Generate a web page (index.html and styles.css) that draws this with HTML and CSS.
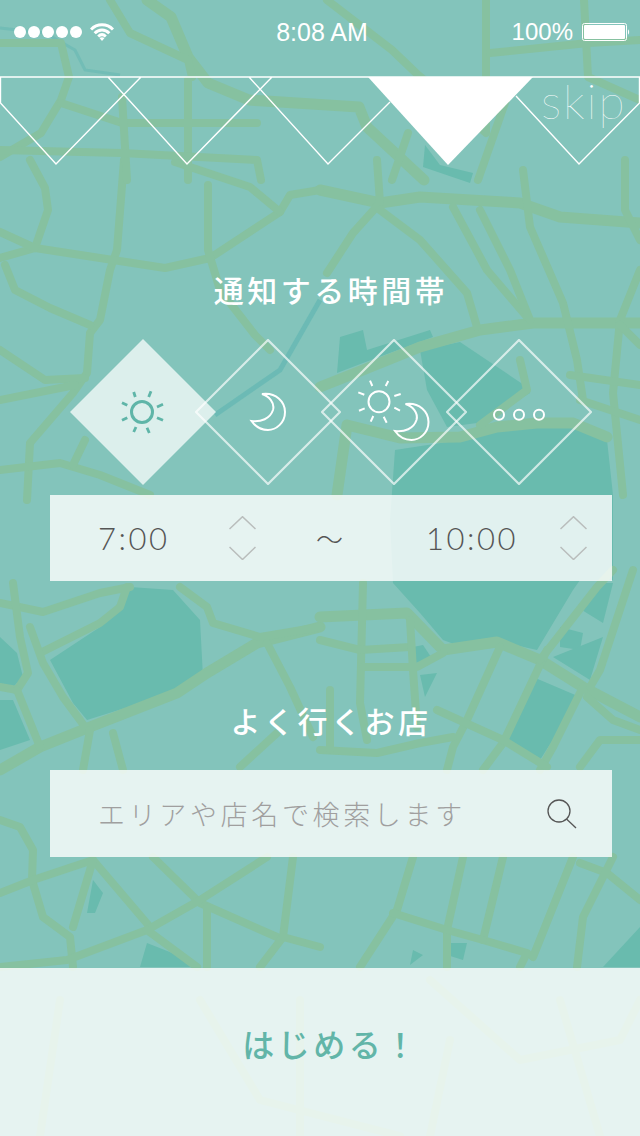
FILE: index.html
```html
<!DOCTYPE html>
<html lang="ja">
<head>
<meta charset="utf-8">
<title>通知する時間帯</title>
<link rel="stylesheet" href="styles.css">
</head>
<body>
<div class="page">
  <svg class="map" viewBox="0 0 640 1136" aria-hidden="true">
    <g class="water">
      <path d="M130 587L173 590 200 620 203 677 173 693 87 720 73 703 50 660 100 627Z"/>
      <path d="M0 637L17 653 23 677 13 687 0 685Z"/>
      <path d="M0 700L13 700 30 740 0 750Z"/>
      <path d="M395 450L460 440 500 430 570 425 607 440 613 495 613 580 580 580 573 590 537 650 493 640 470 650 443 640 420 613 393 583 390 520Z"/>
      <path d="M420 350L460 342 527 387 530 393 477 423 447 427 427 390Z"/>
      <path d="M340 337L363 330 367 350 430 330 433 337 363 363 337 373Z"/>
      <path d="M425 145L440 165 473 173 470 183 423 167Z"/>
      <path d="M533 677L580 697 540 760 507 740Z"/>
      <path d="M560 627L583 633 580 650 560 647Z"/>
      <path d="M553 657L603 637 590 680Z"/>
      <path d="M577 607L597 583 613 583 603 623Z"/>
      <path d="M413 647L423 645 433 660 415 663Z"/>
      <path d="M420 675L437 673 425 697Z"/>
      <path d="M87 913L93 880 103 893 95 913Z"/>
      <path d="M140 967L147 943 190 960 193 967Z"/>
      <path d="M640 927L603 967 640 967Z"/>
      <path d="M447 955L447 943 467 943 463 960Z"/>
      <path d="M410 965L413 950 423 955Z"/>
    </g>
    <path class="river" d="M320 300L300 335 280 370 215 415"/>
    <path class="river river-thin" d="M0 28L45 33 75 50 85 70 120 75"/>
    <g class="roads roads-main">
      <path d="M320 190L380 203 420 197 520 203 560 217 640 223"/>
      <path d="M320 387L363 370 420 347 480 330 533 323 640 323"/>
      <path d="M0 770L40 747 90 727 177 693 207 673 257 643 320 627"/>
      <path d="M320 617L407 613 443 650 497 642 540 660 583 687 640 717"/>
      <path d="M337 495L347 425 400 438 460 437 497 427 537 423 573 423 607 437"/>
      <path d="M147 0L171 17 188 57 208 83 249 100 359 107 367 127 424 180"/>
    </g>
    <g class="roads">
      <path d="M30 160L45 188 48 210 36 245"/>
      <path d="M124 160L117 250 110 270 100 320 90 333 87 373 73 393 30 443 27 500"/>
      <path d="M0 258L35 248 100 258 165 268 210 258 280 212 290 195 320 190"/>
      <path d="M175 162L250 187 280 212"/>
      <path d="M208 185L208 250 220 290 255 335 270 350"/>
      <path d="M0 232L35 248"/>
      <path d="M5 265L15 290 50 308 90 325"/>
      <path d="M0 350L45 380 85 378"/>
      <path d="M0 400L75 385"/>
      <path d="M0 470L60 463 100 475 150 495"/>
      <path d="M85 440L73 465"/>
      <path d="M377 160L380 203 353 233 327 273"/>
      <path d="M380 210L420 240 467 293 477 327"/>
      <path d="M453 207L487 270 527 317"/>
      <path d="M480 210L510 270 530 320"/>
      <path d="M523 170L530 227 563 303 577 360 583 400"/>
      <path d="M625 160L625 210 640 240"/>
      <path d="M640 270L620 320 613 393 623 495"/>
      <path d="M620 325L640 345"/>
      <path d="M570 375L640 385"/>
      <path d="M580 400L640 420"/>
      <path d="M520 360L527 390 480 425"/>
      <path d="M0 603L43 612 100 593 130 587"/>
      <path d="M40 653L100 623 120 607 127 587"/>
      <path d="M13 583L20 637 28 673 17 690 0 687"/>
      <path d="M30 627L43 663 63 697 80 720 87 730"/>
      <path d="M17 690L40 747"/>
      <path d="M180 587L207 607 213 623 260 637 320 627"/>
      <path d="M267 643L290 687 313 737"/>
      <path d="M240 767L277 733"/>
      <path d="M90 730L83 770"/>
      <path d="M113 733L123 770"/>
      <path d="M0 820L20 827 33 850 32 880 43 917 70 937 73 967"/>
      <path d="M0 893L33 880 93 860 150 927"/>
      <path d="M93 860L73 927"/>
      <path d="M153 857L200 903 277 937"/>
      <path d="M267 857L200 900 147 930 67 960 0 967"/>
      <path d="M147 930L197 967"/>
      <path d="M207 907L207 967"/>
      <path d="M293 857L283 937 260 967"/>
      <path d="M283 937L320 947"/>
      <path d="M363 583L360 703 367 740"/>
      <path d="M320 640L360 650 410 647"/>
      <path d="M410 620L413 670 417 727"/>
      <path d="M443 653L417 667 363 667"/>
      <path d="M500 647L467 720 453 747 447 770"/>
      <path d="M547 650L503 743 483 770"/>
      <path d="M540 660L597 587 613 570"/>
      <path d="M583 687L553 747 540 770"/>
      <path d="M633 570L600 670 590 687"/>
      <path d="M437 710L503 740 547 767"/>
      <path d="M320 750L377 753 420 743 453 737"/>
      <path d="M587 697L613 720 640 730"/>
      <path d="M640 740L600 740 580 767"/>
      <path d="M330 690L330 750"/>
      <path d="M413 857L397 910 360 967"/>
      <path d="M463 857L447 930 447 967"/>
      <path d="M503 857L483 940 527 953 520 967"/>
      <path d="M573 857L533 957"/>
      <path d="M393 913L447 930 483 940"/>
      <path d="M580 863L607 873 640 900"/>
      <path d="M613 857L583 917 577 967"/>
      <path d="M110 0L130 33 188 60 192 77"/>
      <path d="M0 43L61 43 69 77 61 100 41 133 0 157"/>
      <path d="M61 103L122 123 257 123"/>
      <path d="M122 97L127 180"/>
      <path d="M188 80L188 180"/>
      <path d="M0 150L122 153 257 160 261 180"/>
      <path d="M327 0L392 50 416 73 486 133 486 0"/>
      <path d="M584 0L588 77 640 100"/>
      <path d="M490 53L588 43 640 40"/>
      <path d="M408 133L392 180"/>
      <path d="M506 100L478 180"/>
      <path d="M60 1000L40 1136"/>
      <path d="M200 1000L260 1100 400 1136"/>
      <path d="M430 980L520 1060 620 1040 640 1000"/>
      <path d="M300 1000L300 1136"/>
      <path d="M450 1040L430 1136"/>
      <path d="M560 1000L600 1136"/>
    </g>
  </svg>

  <header class="status">
    <div class="status-left">
      <span class="signal"><i></i><i></i><i></i><i></i><i></i></span>
      <svg class="wifi" viewBox="0 0 24 18" aria-hidden="true">
        <path d="M1 6.500C7 .2 17 .2 23 6.500"/>
        <path d="M4.700 10.200C9 5.800 15 5.800 19.300 10.200"/>
        <path d="M8.200 13.500C10.500 11.300 13.500 11.300 15.800 13.500"/>
        <path class="wifi-tip" d="M12 18L9.500 15C11 14 13 14 14.500 15Z"/>
      </svg>
    </div>
    <span class="clock">8:08 AM</span>
    <div class="status-right">
      <span class="percent">100%</span>
      <svg class="battery" viewBox="0 0 48 18" aria-hidden="true">
        <rect class="battery-shell" x=".5" y=".5" width="44" height="17" rx="2"/>
        <rect class="battery-fill" x="2" y="2" width="41" height="14" rx="1"/>
        <path class="battery-fill" d="M46 6.500C47.500 7 47.500 11 46 11.500Z"/>
      </svg>
    </div>
  </header>

  <nav class="steps">
    <svg class="bunting" viewBox="0 0 640 90" aria-hidden="true">
      <path class="bunting-line" d="M0 1H640M.5 1V27L56 88 141 1M108 1L187 88 272 1M249 1L328 88 390 26M516 20L579 88 639.500 27V1"/>
      <path class="bunting-on" d="M368 1H533L448 89Z"/>
    </svg>
    <span class="skip">skip</span>
  </nav>

  <h2 class="heading heading-first">通知する時間帯</h2>

  <div class="slots">
    <svg class="slot" viewBox="-73 -73 146 146" aria-hidden="true">
      <path class="slot-on" d="M0 -73L73 0 0 73 -73 0Z"/>
      <g transform="translate(-1 0)">
        <circle class="sun-dark" r="10.500"/>
        <path class="sun-dark sun-rays" d="M-8.300 -20L-6.700 -15M9 -20.700L6.700 -15M-20 -9.300L-14.700 -6.700M21 -7.700L15 -5M-20 8.300L-14.700 5.700M15 5.700L21 8.300M-8.300 20L-6 15M7.300 21L5 15.700"/>
      </g>
    </svg>
    <svg class="slot" viewBox="-73 -73 146 146" aria-hidden="true">
      <path class="slot-line" d="M0 -72L72 0 0 72 -72 0Z"/>
      <path class="glyph" d="M-6 -18C8 -20 17 -10 17 0C17 11 8 18 0 18C-7 18 -13 14 -16.500 9C-7 10 2 7 5 -2C7 -9 1 -16 -6 -18Z"/>
    </svg>
    <svg class="slot" viewBox="-73 -73 146 146" aria-hidden="true">
      <path class="slot-line" d="M0 -72L72 0 0 72 -72 0Z"/>
      <g transform="translate(-15 -10.300)">
        <circle class="glyph" r="10.500"/>
        <path class="glyph" d="M-9 -21L-6.700 -15.700M9.300 -20.700L6.700 -15.700M-20.700 -9.300L-14.700 -7M21.700 -7.700L15.300 -5.700M-20 9L-14.300 6.700M15.300 6L21 9M-8.300 20L-5.700 14.300M7.700 21L4.700 15"/>
      </g>
      <path class="glyph" transform="translate(17.500 10)" d="M-6 -18C8 -20 17 -10 17 0C17 11 8 18 0 18C-7 18 -13 14 -16.500 9C-7 10 2 7 5 -2C7 -9 1 -16 -6 -18Z"/>
    </svg>
    <svg class="slot" viewBox="-73 -73 146 146" aria-hidden="true">
      <path class="slot-line" d="M0 -72L72 0 0 72 -72 0Z"/>
      <circle class="glyph" cx="-20" cy="2.700" r="5"/>
      <circle class="glyph" cy="2.700" r="5"/>
      <circle class="glyph" cx="20" cy="2.700" r="5"/>
    </svg>
  </div>

  <div class="panel times">
    <span class="time time-start">7:00</span>
    <svg class="stepper" viewBox="0 0 27 44" aria-hidden="true"><path d="M.5 13L13.500 .7 26.500 13M.5 31L13.500 43.500 26.500 31"/></svg>
    <span class="tilde">〜</span>
    <span class="time time-end">10:00</span>
    <svg class="stepper" viewBox="0 0 27 44" aria-hidden="true"><path d="M.5 13L13.500 .7 26.500 13M.5 31L13.500 43.500 26.500 31"/></svg>
  </div>

  <h2 class="heading heading-second">よく行くお店</h2>

  <div class="panel search">
    <span class="placeholder">エリアや店名で検索します</span>
    <svg class="search-icon" viewBox="0 0 30 30" aria-hidden="true"><circle cx="12" cy="12" r="11"/><path d="M19.500 20L29 29"/></svg>
  </div>

  <footer class="start">はじめる！</footer>
</div>
</body>
</html>
```

FILE: styles.css
```css
* { box-sizing: border-box; }
html, body { margin: 0; padding: 0; }
body { font-family: "Noto Sans CJK JP", "Noto Sans", sans-serif; }

.page {
  position: relative;
  display: flex;
  flex-direction: column;
  width: 640px;
  height: 1136px;
  overflow: hidden;
  background: #83c4bb;
}
.page > *:not(.map) { position: relative; }

.map { position: absolute; inset: 0; width: 640px; height: 1136px; filter: blur(.7px); }
.water path { fill: #69bbae; }
.river { fill: none; stroke: #62b6b2; stroke-width: 5; opacity: .7; }
.river-thin { stroke-width: 3; opacity: .5; }
.roads path {
  fill: none;
  stroke: #86c1a0;
  stroke-width: 8;
  stroke-linejoin: round;
  stroke-linecap: round;
}
.roads-main path { stroke-width: 11; }

.status {
  display: flex;
  align-items: center;
  justify-content: space-between;
  height: 76px;
  padding: 0 10px 12px 14px;
  color: #fff;
  font: 24px/1 "Liberation Sans", Arial, sans-serif;
}
.status-left, .status-right { display: flex; align-items: center; width: 130px; }
.status-right { justify-content: flex-end; }
.signal { display: flex; gap: 2px; }
.signal i { width: 12px; height: 12px; border-radius: 50%; background: #fff; }
.wifi { width: 24px; height: 18px; margin-left: 8px; }
.wifi path { fill: none; stroke: #fff; stroke-width: 3; }
.wifi .wifi-tip { fill: #fff; stroke: none; }
.clock { font-size: 25px; }
.percent { margin-right: 9px; }
.battery { width: 48px; height: 18px; }
.battery-shell { fill: none; stroke: #fff; stroke-width: 1; }
.battery-fill { fill: #fff; }

.steps { height: 90px; flex: none; }
.bunting { display: block; width: 640px; height: 90px; }
.bunting-line { fill: none; stroke: #fff; stroke-width: 1.400; }
.bunting-on { fill: #fff; }
.skip {
  position: absolute;
  top: -5px;
  left: 541px;
  color: #fff;
  font: 100 48px/60px Lato, sans-serif;
  letter-spacing: 2px;
}

.heading {
  flex: none;
  width: 562px;
  height: 44px;
  margin: 0 0 0 50px;
  color: #fff;
  font-size: 30px;
  font-weight: 500;
  line-height: 40px;
  letter-spacing: 3.500px;
  text-align: center;
}
.heading-first { margin-top: 103px; }
.heading-second { margin-top: 119px; }

.slots { display: flex; flex: none; margin-top: 26px; padding-left: 69.5px; }
.slot { flex: none; width: 146px; height: 146px; }
.slot + .slot { margin-left: -20.5px; }
.slot-on { fill: rgba(255, 255, 255, .72); }
.slot-line { fill: none; stroke: rgba(255, 255, 255, .68); stroke-width: 2.200; }
.glyph { fill: none; stroke: #fff; stroke-width: 2; }
.sun-dark { fill: none; stroke: #5fb5a8; stroke-width: 3; }
.sun-rays { stroke-width: 2.800; }

.panel {
  display: flex;
  flex: none;
  align-items: center;
  width: 562px;
  margin-left: 50px;
  background: rgba(255, 255, 255, .8);
}
.times { height: 86px; margin-top: 10px; padding-left: 48px; }
.time {
  flex: none;
  color: #555;
  font-family: Lato, sans-serif;
  font-size: 31px;
  font-weight: 300;
  letter-spacing: 2.500px;
  line-height: 1;
}
.time-start { width: 131px; }
.time-end { width: 134px; margin-left: 83px; }
.stepper { flex: none; width: 27px; height: 44px; }
.stepper path { fill: none; stroke: #b9bdbc; stroke-width: 1.500; }
.tilde {
  flex: none;
  width: 27px;
  margin-left: 60px;
  color: #555;
  font-size: 27px;
  font-weight: 300;
  line-height: 1;
}

.search { height: 87px; margin-top: 26px; padding-left: 48px; }
.placeholder {
  flex: none;
  width: 449px;
  color: #a09f9f;
  font-size: 27px;
  font-weight: 300;
  letter-spacing: 3.650px;
  line-height: 1;
}
.search-icon { flex: none; width: 30px; height: 30px; }
.search-icon circle, .search-icon path { fill: none; stroke: #555; stroke-width: 1.300; }

.start {
  flex: none;
  height: 168px;
  margin-top: auto;
  padding-left: 50px;
  padding-right: 28px;
  background: rgba(255, 255, 255, .8);
  color: #62b5a8;
  font-size: 32px;
  font-weight: 500;
  line-height: 150px;
  letter-spacing: 3.500px;
  text-align: center;
}
```
